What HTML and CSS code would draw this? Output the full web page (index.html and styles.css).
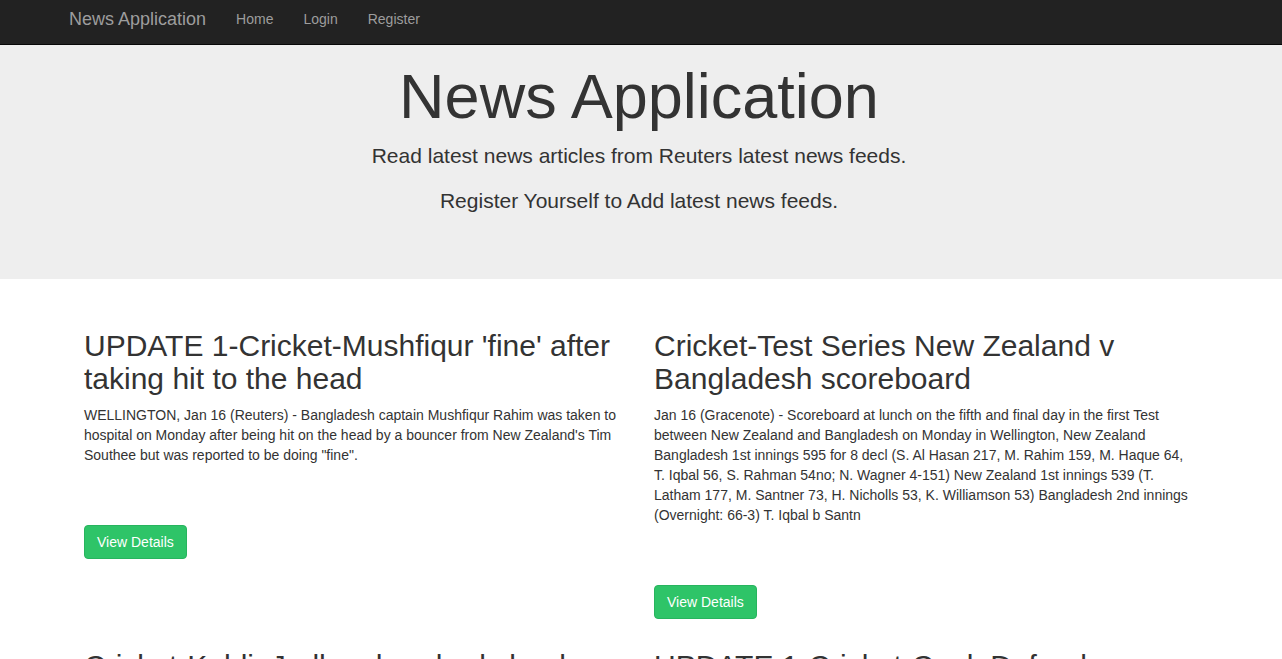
FILE: index.html
```html
<!DOCTYPE html>
<html lang="en">
<head>
<meta charset="utf-8">
<title>News Application</title>
<link rel="stylesheet" href="styles.css">
</head>
<body>
<nav class="navbar">
  <div class="container navbar-inner">
    <a class="brand" href="#">News Application</a>
    <ul class="nav">
      <li><a href="#">Home</a></li>
      <li><a href="#">Login</a></li>
      <li><a href="#">Register</a></li>
    </ul>
  </div>
</nav>
<div class="jumbotron">
  <div class="container">
    <h1>News Application</h1>
    <p>Read latest news articles from Reuters latest news feeds.</p>
    <p>Register Yourself to Add latest news feeds.</p>
  </div>
</div>
<div class="container">
  <div class="news-grid">
    <article class="news-item">
      <h2>UPDATE 1-Cricket-Mushfiqur 'fine' after taking hit to the head</h2>
      <p class="summary">WELLINGTON, Jan 16 (Reuters) - Bangladesh captain Mushfiqur Rahim was taken to hospital on Monday after being hit on the head by a bouncer from New Zealand's Tim Southee but was reported to be doing "fine".</p>
      <p class="actions"><a class="btn" href="#">View Details</a></p>
    </article>
    <article class="news-item">
      <h2>Cricket-Test Series New Zealand v Bangladesh scoreboard</h2>
      <p class="summary">Jan 16 (Gracenote) - Scoreboard at lunch on the fifth and final day in the first Test between New Zealand and Bangladesh on Monday in Wellington, New Zealand Bangladesh 1st innings 595 for 8 decl (S. Al Hasan 217, M. Rahim 159, M. Haque 64, T. Iqbal 56, S. Rahman 54no; N. Wagner 4-151) New Zealand 1st innings 539 (T. Latham 177, M. Santner 73, H. Nicholls 53, K. Williamson 53) Bangladesh 2nd innings (Overnight: 66-3) T. Iqbal b Santn</p>
      <p class="actions"><a class="btn" href="#">View Details</a></p>
    </article>
    <article class="news-item">
      <h2>Cricket-Kohli, Jadhav hundreds lead India to victory</h2>
      <p class="summary">PUNE, India, Jan 15 (Reuters) - Virat Kohli and Kedar Jadhav struck hundreds to lead India to a three-wicket victory over England.</p>
      <p class="actions"><a class="btn" href="#">View Details</a></p>
    </article>
    <article class="news-item">
      <h2>UPDATE 1-Cricket-Cook Defends England</h2>
      <p class="summary">Jan 15 (Reuters) - England's batsmen came under scrutiny after the defeat.</p>
      <p class="actions"><a class="btn" href="#">View Details</a></p>
    </article>
  </div>
</div>
</body>
</html>
```

FILE: styles.css
```css
* {
  box-sizing: border-box;
}

html, body {
  margin: 0;
  padding: 0;
}

body {
  font-family: "Liberation Sans", Arial, Helvetica, sans-serif;
  font-size: 14px;
  line-height: 20px;
  color: #333333;
  background: #ffffff;
}

a {
  text-decoration: none;
}

.container {
  width: 1170px;
  margin-left: calc((100% - 1174px) / 2);
  padding: 0 15px;
}

/* Navbar */
.navbar {
  background: #222222;
  border-bottom: 1px solid #080808;
  height: 45px;
}

.navbar-inner {
  display: flex;
  align-items: flex-start;
}

.brand {
  display: block;
  margin-left: -15px;
  padding: 9px 15px 10px;
  font-size: 18px;
  line-height: 20px;
  color: #9d9d9d;
}

.nav {
  display: flex;
  list-style: none;
  margin: 0;
  padding: 0;
}

.nav a {
  display: block;
  padding: 9px 15px 10px;
  font-size: 14px;
  line-height: 20px;
  color: #9d9d9d;
}

/* Jumbotron */
.jumbotron {
  background: #eeeeee;
  padding: 17px 0 48px;
  margin-bottom: 30px;
  text-align: center;
}

.jumbotron h1 {
  margin: 0 0 10px;
  font-size: 63px;
  font-weight: 500;
  line-height: 1.1;
  color: #333333;
}

.jumbotron p {
  margin: 0 0 15px;
  font-size: 21px;
  font-weight: 200;
  line-height: 30px;
}

/* News grid */
.news-grid {
  display: grid;
  grid-template-columns: 1fr 1fr;
}

.news-item {
  padding: 0 15px;
}

.news-item h2 {
  margin: 20px 0 10px;
  font-size: 30px;
  font-weight: 500;
  line-height: 1.1;
  color: #333333;
}

.summary {
  margin: 0 0 10px;
}

.actions {
  margin: 60px 0 10px;
  line-height: 0;
}

.btn {
  display: inline-block;
  padding: 6px 12px;
  font-size: 14px;
  line-height: 20px;
  color: #ffffff;
  background: #2ec468;
  border: 1px solid #27b45e;
  border-radius: 4px;
}
```
